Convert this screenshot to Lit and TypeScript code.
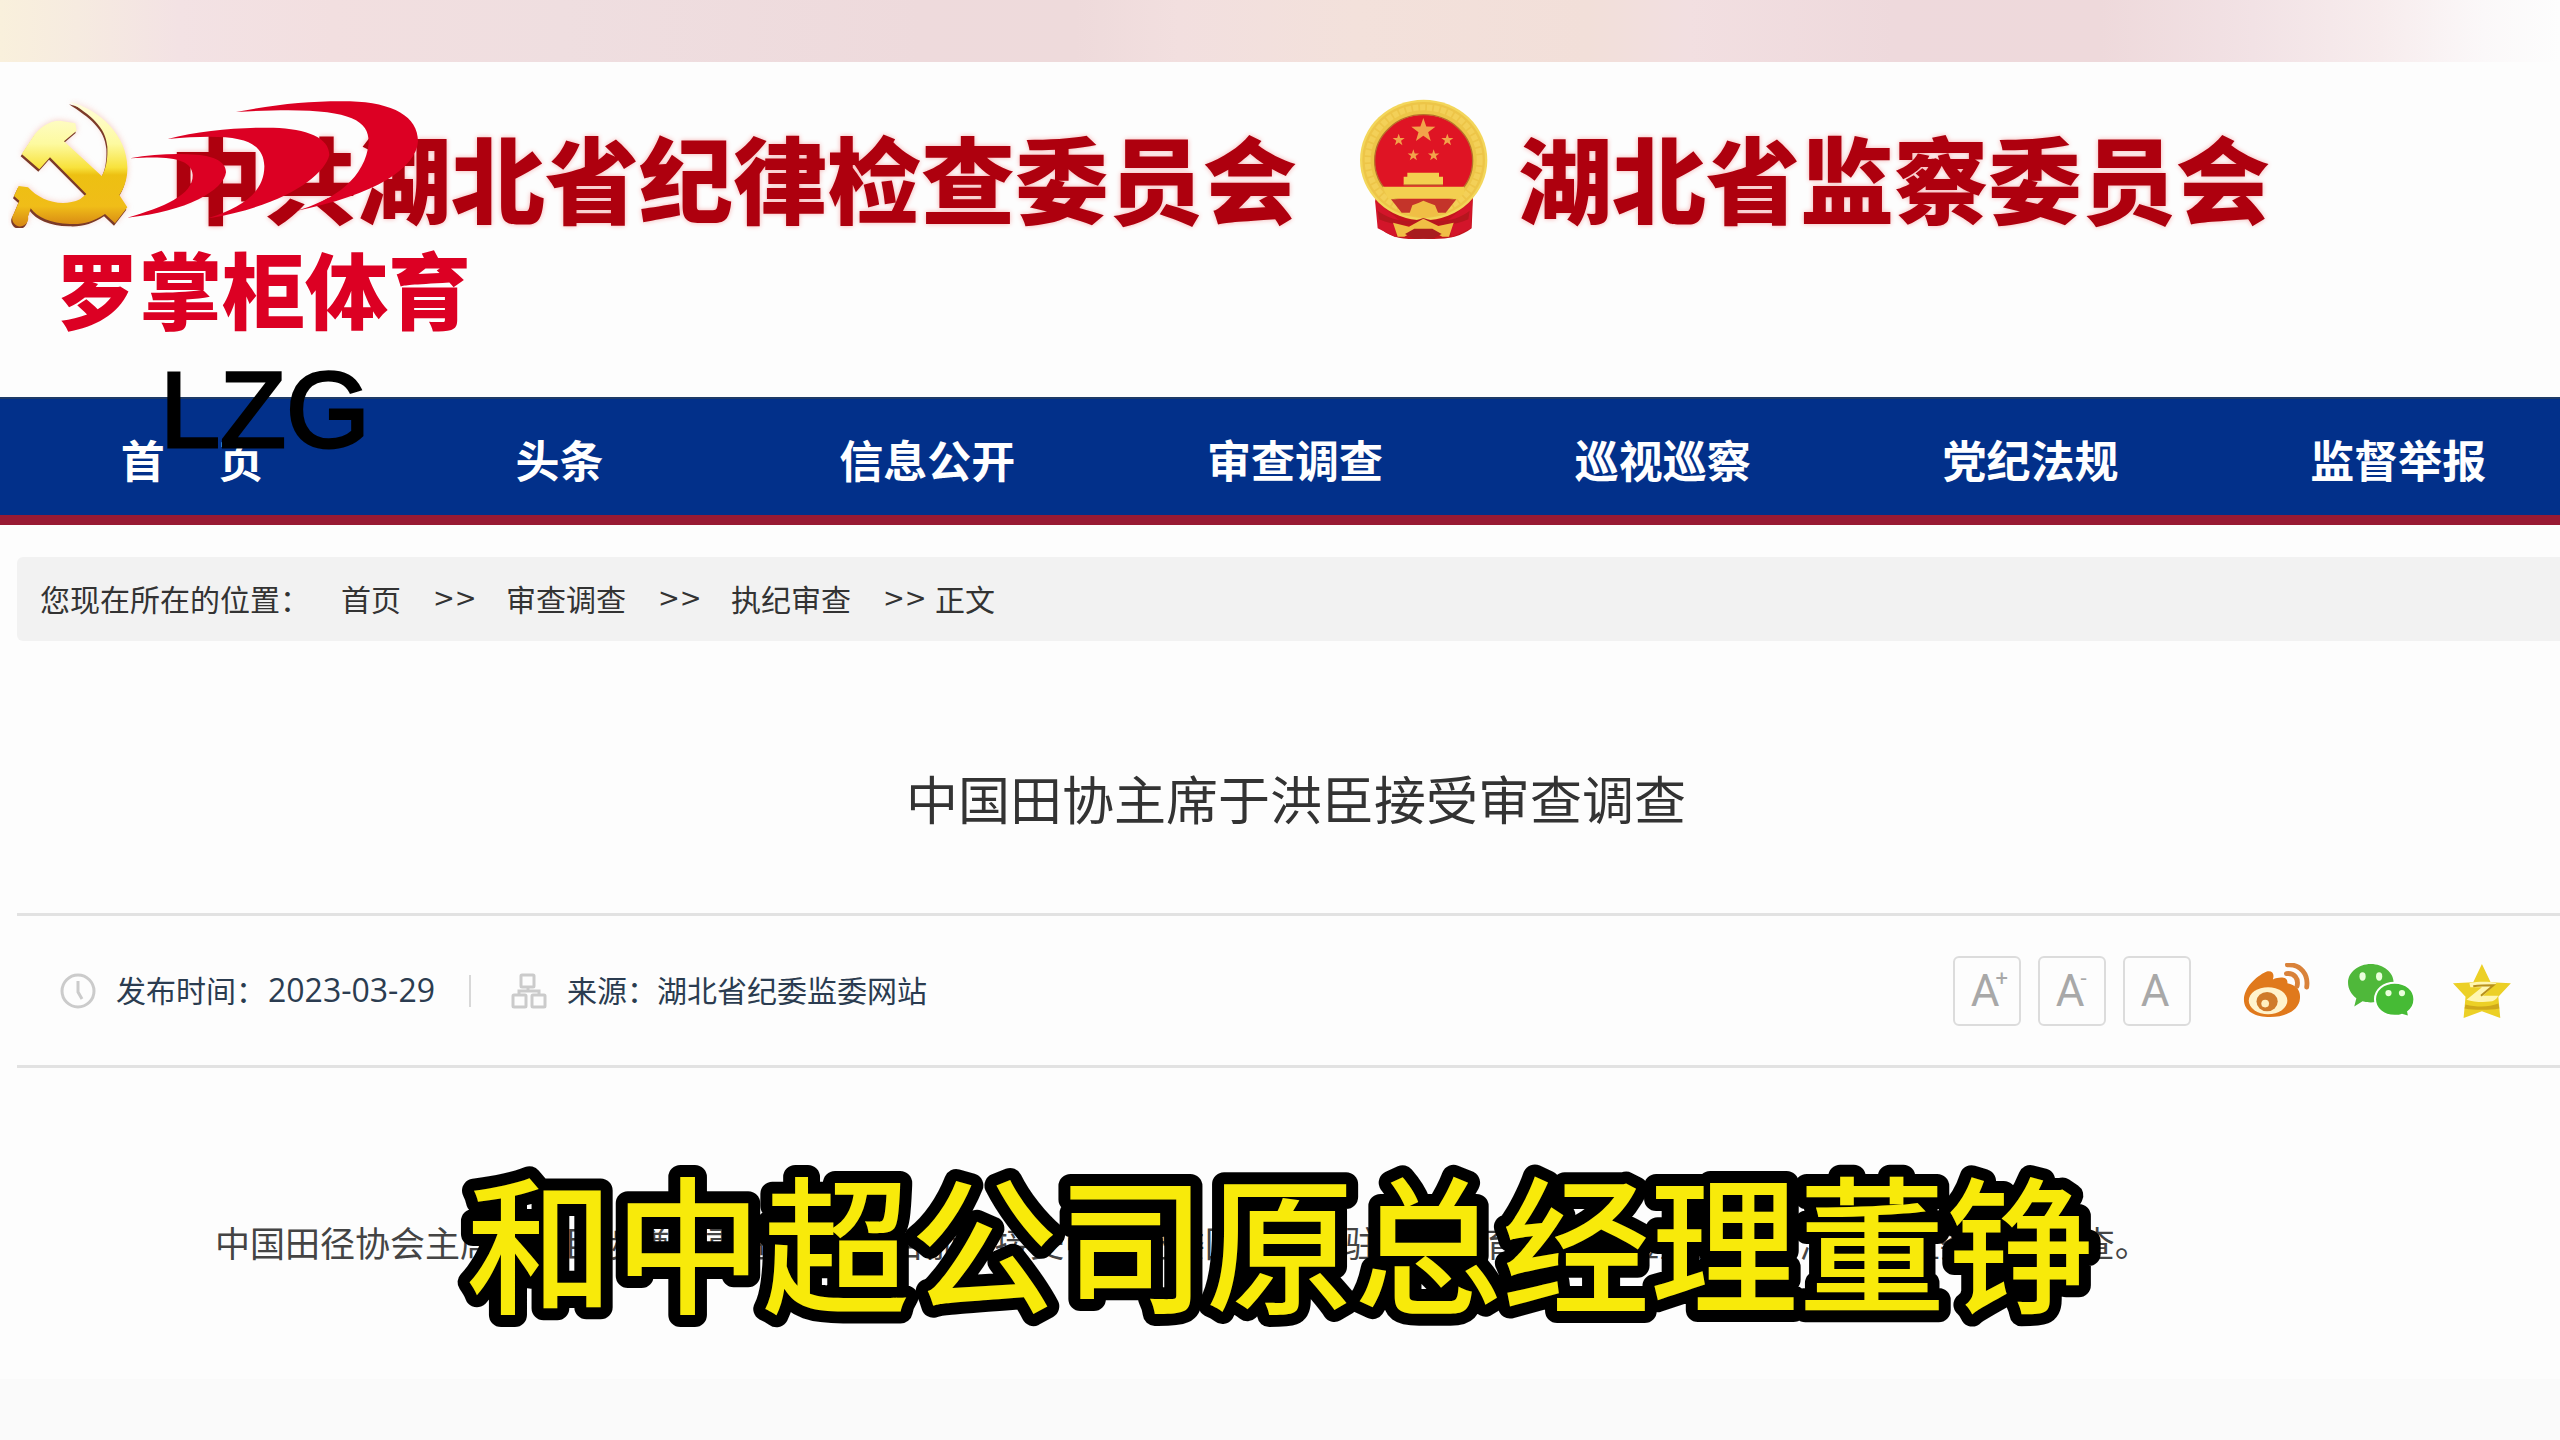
import { LitElement, html, css, svg } from "lit";
import { customElement } from "lit/decorators.js";

const star = (cx: number, cy: number, r: number) => {
  const pts: string[] = [];
  for (let i = 0; i < 10; i++) {
    const a = -Math.PI / 2 + (i * Math.PI) / 5;
    const q = i % 2 ? r * 0.4 : r;
    pts.push(`${(cx + q * Math.cos(a)).toFixed(1)},${(cy + q * Math.sin(a)).toFixed(1)}`);
  }
  return svg`<polygon points=${pts.join(" ")} />`;
};

const sickle =
  "M210 66C300 88 386 170 382 270C381 300 372 325 358 345L382 382L345 430L315 402C280 425 250 434 210 432C150 430 112 412 92 385L84 410A24 24 0 1 1 42 400L58 362L42 348L56 318L84 322C120 362 185 384 240 358L262 340C305 300 325 270 322 200C318 140 270 105 210 66Z";
const hammer =
  "M65 222L98 172C115 145 145 122 180 122L226 130L230 152L192 184L318 300L300 345L262 345L150 232L118 268Z";

const partyEmblem = html`<svg class="party" viewBox="24 54 378 390" aria-hidden="true">
  <defs>
    <linearGradient id="gold" x1="0" y1="60" x2="0" y2="435" gradientUnits="userSpaceOnUse">
      <stop offset="0" stop-color="#fffde0" />
      <stop offset="0.35" stop-color="#fdfaa0" />
      <stop offset="0.54" stop-color="#f8e23c" />
      <stop offset="0.6" stop-color="#edc012" />
      <stop offset="0.85" stop-color="#f0bd18" />
      <stop offset="1" stop-color="#d88a14" />
    </linearGradient>
    <filter id="glow" x="-20%" y="-20%" width="140%" height="140%"><feGaussianBlur stdDeviation="9" /></filter>
  </defs>
  <g filter="url(#glow)" fill="#f3b3a6" opacity="0.7"><path d=${sickle} /><path d=${hammer} /></g>
  <g fill="#7b3a28" transform="translate(-3 7)"><path d=${sickle} /><path d=${hammer} /></g>
  <g fill="url(#gold)"><path d=${sickle} /><path d=${hammer} /></g>
</svg>`;

const stateEmblem = html`<svg class="state" viewBox="174 114 399 432" aria-hidden="true">
  <path d="M228 410L240 500C270 535 320 540 373 536C430 540 480 535 518 505L522 410Z" fill="#c3141c" />
  <path d="M228 420L236 505L290 532L300 480Z M520 420L516 505L458 532L448 480Z" fill="#d3152a" />
  <ellipse cx="374" cy="300" rx="191" ry="181" fill="#f3d65a" />
  <ellipse cx="374" cy="300" rx="184" ry="174" fill="#edc548" />
  <ellipse cx="374" cy="300" rx="168" ry="158" fill="none" stroke="#f3d058" stroke-width="18" stroke-dasharray="16 5" />
  <ellipse cx="374" cy="302" rx="147" ry="138" fill="#df1424" stroke="#b8702a" stroke-width="4" />
  <g fill="#f2a24a">
    ${star(373, 212, 38)}${star(299, 240, 19)}${star(445, 240, 19)}${star(343, 286, 18)}${star(404, 286, 18)}
  </g>
  <path d="M325 338H420V350H432V374H314V350H325Z" fill="#f3cf50" />
  <path d="M250 380H496V400L480 416H268Z" fill="#f3cf50" />
  <path d="M314 375H432" stroke="#b8702a" stroke-width="3" />
  <path d="M276 418H472L440 458H308Z" fill="#c4342a" />
  <path d="M330 465L340 436L360 428L373 422L388 428L408 436L420 465L373 474Z" fill="#f0be45" />
  <path d="M236 452C280 484 330 490 373 474C420 490 470 484 512 452L508 478C470 496 420 500 373 484C330 500 280 496 240 478Z" fill="#b5161e" />
  <path d="M282 488L330 500L373 476L418 498L464 488L450 530H430L400 514H346L316 530H296Z" fill="#f0be45" />
  <path d="M318 522L346 506H400L428 522L400 536H346Z" fill="#a81c1e" />
</svg>`;

const swooshes = html`<svg class="swoosh" viewBox="381 54 882 360" aria-hidden="true">
  <g fill="#dc0023">
    <path d="M708 96C830 72 940 62 1050 64C1180 68 1254 110 1254 184C1250 262 1130 345 884 394C1010 360 1096 290 1106 190C1110 110 1030 76 708 96Z" />
    <path d="M503 177C600 152 720 142 820 143C920 147 988 172 988 225C972 290 850 378 620 416C720 384 794 340 793 258C790 180 720 158 503 177Z" />
    <path d="M390 235C460 222 530 220 590 224C645 229 678 246 678 277C672 330 560 396 382 413C490 382 580 345 578 285C576 240 520 226 390 235Z" />
  </g>
</svg>`;

const clock = html`<svg class="glyph" viewBox="0 0 36 36" aria-hidden="true">
  <g fill="none" stroke="#cbcbcb" stroke-width="3"><circle cx="18" cy="18" r="16" /><path d="M18 8V19L22 26" /></g>
</svg>`;

const tree = html`<svg class="glyph" viewBox="0 0 36 36" aria-hidden="true">
  <g fill="none" stroke="#cbcbcb" stroke-width="3">
    <rect x="10" y="2" width="13" height="12" rx="1" /><rect x="2" y="22" width="13" height="12" rx="1" />
    <rect x="21" y="22" width="13" height="12" rx="1" /><path d="M17 14V18M8 22V18H28V22" />
  </g>
</svg>`;

const weibo = html`<svg class="share" viewBox="0 0 70 58" aria-hidden="true">
  <path d="M2 38C2 26 14 14 25 9C31 7 34 11 32 17C39 14 48 14 47 21C56 23 61 28 60 37C59 49 45 56 29 56C14 56 2 50 2 38Z" fill="#e0791c" />
  <ellipse cx="27" cy="39" rx="20" ry="14" fill="#fff3cd" />
  <ellipse cx="26" cy="40" rx="11" ry="10" fill="#cf7a2a" />
  <circle cx="24" cy="42" r="4" fill="#fff0c0" />
  <path d="M47 2C61 1 69 12 67 25M46 11C54 10 59 16 57 24" fill="none" stroke="#d9823a" stroke-width="5" stroke-linecap="round" />
</svg>`;

const wechat = html`<svg class="share" viewBox="0 0 66 54" aria-hidden="true">
  <path d="M23 1C35 1 45 9 45 19C45 30 35 38 23 38C20 38 18 38 15 37L7 42L9 34C4 30 1 25 1 19C1 9 11 1 23 1Z" fill="#4fb83a" />
  <path d="M46 19C57 19 65 26 65 35C65 40 63 44 59 47L60 52L53 50C51 51 48 51 46 51C35 51 27 44 27 35C27 26 35 19 46 19Z" fill="#46bb35" stroke="#fff" stroke-width="2" />
  <g fill="#eaffdc"><ellipse cx="15" cy="13" rx="3" ry="4" /><ellipse cx="31" cy="13" rx="3" ry="4" /><circle cx="40" cy="29" r="3" /><circle cx="53" cy="29" r="3" /></g>
</svg>`;

const qzone = html`<svg class="share" viewBox="0 0 62 58" aria-hidden="true">
  <path d="M31 1L40 20L61 21L48 35L50 57L31 50L12 57L14 35L1 21L22 20Z" fill="#ecd026" />
  <path d="M18 21C28 19 38 19 46 21L32 34L48 34C46 38 43 40 39 40C30 41 22 40 15 38L31 25L19 25Z" fill="#fff6b0" />
  <path d="M22 24C30 23 36 23 43 23L30 34" fill="none" stroke="#b8901a" stroke-width="2" />
  <path d="M14 43C26 46 38 46 48 42L49 47C38 49 24 49 13 47Z" fill="#cfa81a" />
</svg>`;

@customElement("app-root")
export class AppRoot extends LitElement {
  static styles = css`
    :host {
      display: block;
      position: relative;
      overflow: hidden;
      background: #fdfdfd;
      color: #333;
      font-family: "Noto Sans CJK SC", sans-serif;
      font-size: 30px;
    }
    * { box-sizing: border-box; }
    svg { display: block; flex: none; }
    h1, p { margin: 0; font-weight: 400; }
    a { color: inherit; text-decoration: none; }
    .band {
      height: 62px;
      background: linear-gradient(90deg, #f9f0dc 0, #f6ebe0 3%, #f3e2e4 7%, #f2dfe0 13%, #efdee0 22%, #eedadc 36%, #eedadb 42%, #f2dfdf 46%, #f3e1db 53%, #f2dfd9 62%, #f2dfe1 66%, #eed9dc 74%, #eed9db 82%, #f2e2e5 88%, #f7eced 93%, #fbf8f9 97%, #fdfdfd 100%);
    }
    .masthead { display: flex; align-items: flex-start; height: 335px; padding: 36px 8px 0; white-space: nowrap; }
    .party { width: 126px; height: 130px; margin-right: 35px; }
    .state { width: 133px; height: 144px; margin: 0 28px 0 60px; }
    .org {
      margin-top: 31px;
      font-size: 94px;
      line-height: 94px;
      font-weight: 900;
      color: #ae000e;
      text-shadow: 0 0 5px #f6b0b0;
    }
    .nav { height: 128px; background: #02308a; border-top: 2px solid #1d3a68; border-bottom: 10px solid #981a33; }
    .menu {
      display: grid;
      grid-template-columns: repeat(7, 1fr);
      align-items: center;
      height: 100%;
      margin: 0 -22px 0 8px;
      padding: 3px 0 0;
      list-style: none;
      text-align: center;
      color: #fff;
      font-size: 44px;
      line-height: 64px;
      font-weight: 700;
    }
    .article { padding: 32px 0 0 17px; }
    .crumbs { display: flex; align-items: center; height: 84px; padding: 0 0 2px 23px; background: #f2f2f2; border-radius: 6px 0 0 6px; white-space: pre; }
    .where { width: 301px; }
    .sep { width: 44px; margin: 0 29px 0 32px; font-family: "DejaVu Sans", sans-serif; font-size: 26px; }
    .sep.last { margin-right: 8px; }
    .title { padding: 118px 0 76px; text-align: center; font-size: 52px; line-height: 78px; color: #333; margin-left: 15px; }
    .meta { display: flex; align-items: center; height: 155px; padding: 0 48px 0 43px; border-top: 3px solid #e2e2e2; border-bottom: 3px solid #e2e2e2; color: #2b3c50; }
    .glyph { width: 36px; height: 36px; }
    .label { margin-left: 20px; padding-bottom: 4px; }
    .date { padding: 0 0 2px 2px; font-family: "Open Sans", sans-serif; font-size: 32px; }
    .bar { width: 2px; height: 32px; margin: 0 40px 0 34px; background: #d8d8d8; }
    .tools { display: flex; align-items: center; gap: 17px; margin-left: auto; }
    .size {
      width: 68px; height: 70px; padding: 0 4px 0 0; border: 2px solid #dcdcdc; border-radius: 6px; background: #fdfdfd;
      color: #a8a8a8; font-family: Roboto, sans-serif; font-size: 44px; line-height: 44px;
    }
    .mark { display: inline-block; width: 0; margin: 0 4px 0 -4px; font-size: 22px; vertical-align: 20px; line-height: 20px; }
    .links { display: flex; align-items: center; gap: 37px; margin-left: 34px; }
    .share { height: 56px; }
    .text { padding: 149px 0 112px 198px; font-size: 35px; line-height: 50px; white-space: nowrap; color: #444; }
    .foot { height: 61px; background: #fafafa; }
    .watermark { position: absolute; left: 56px; top: 98px; color: #dc0023; }
    .swoosh { width: 294px; height: 120px; margin-left: 71px; }
    .brand { margin-top: 28px; font-size: 83px; line-height: 82px; font-weight: 900; }
    .latin { margin: 20px 0 0 104px; font-family: "Liberation Sans", sans-serif; font-size: 108px; line-height: 124px; color: #000; -webkit-text-stroke: 3px #000; }
    .caption { position: absolute; left: 0; top: 1116px; width: 100%; height: 260px; }
    .words { font-family: "Noto Sans CJK SC", sans-serif; font-size: 148px; font-weight: 500; fill: #f8ea0a; stroke: #000; stroke-width: 24px; stroke-linejoin: round; paint-order: stroke; }
  `;

  private items = ["首\u2003\u00a0页", "头条", "信息公开", "审查调查", "巡视巡察", "党纪法规", "监督举报"];

  render() {
    return html`
      <div class="band"></div>
      <header class="masthead">
        ${partyEmblem}
        <div class="org">中共湖北省纪律检查委员会</div>
        ${stateEmblem}
        <div class="org">湖北省监察委员会</div>
      </header>
      <nav class="nav">
        <ul class="menu">
          ${this.items.map((t) => html`<li><a href="#">${t}</a></li>`)}
        </ul>
      </nav>
      <main class="article">
        <div class="crumbs"><span class="where">您现在所在的位置：</span><a href="#">首页</a><span class="sep">&gt;&gt;</span><a href="#">审查调查</a><span class="sep">&gt;&gt;</span><a href="#">执纪审查</a><span class="sep last">&gt;&gt;</span><span>正文</span></div>
        <h1 class="title">中国田协主席于洪臣接受审查调查</h1>
        <div class="meta">
          ${clock}<span class="label">发布时间：</span><time class="date" datetime="2023-03-29">2023-03-29</time>
          <span class="bar"></span>
          ${tree}<span class="label">来源：湖北省纪委监委网站</span>
          <div class="tools">
            <button class="size">A<span class="mark">+</span></button>
            <button class="size">A<span class="mark">-</span></button>
            <button class="size">A</button>
            <div class="links">
              <a href="#" aria-label="微博">${weibo}</a>
              <a href="#" aria-label="微信">${wechat}</a>
              <a href="#" aria-label="QQ空间">${qzone}</a>
            </div>
          </div>
        </div>
        <p class="text">中国田径协会主席于洪臣涉嫌严重违纪违法,目前正接受中央纪委国家监委驻国家体育总局纪检监察组和湖北省监委审查调查。</p>
      </main>
      <div class="foot"></div>
      <div class="watermark">
        ${swooshes}
        <div class="brand">罗掌柜体育</div>
        <div class="latin">LZG</div>
      </div>
      <svg class="caption"><text class="words" x="50%" y="186" text-anchor="middle">和中超公司原总经理董铮</text></svg>
    `;
  }
}
